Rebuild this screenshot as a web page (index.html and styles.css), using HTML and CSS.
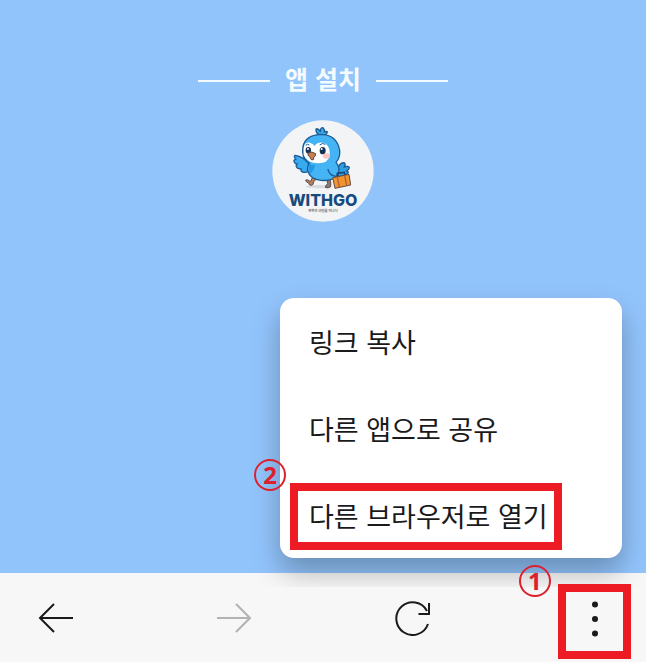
FILE: index.html
```html
<!DOCTYPE html>
<html lang="ko">
<head>
<meta charset="utf-8">
<meta name="viewport" content="width=device-width, initial-scale=1">
<title>앱 설치</title>
<link rel="stylesheet" href="styles.css">
</head>
<body>
<main class="page">
  <h1 class="title">앱 설치</h1>
  <svg class="logo" viewBox="12 12 306 306" role="img" aria-label="WITHGO">
    <circle cx="165" cy="165" r="152" fill="#f2f4f6"/>
    <ellipse cx="152" cy="212" rx="38" ry="5" fill="#d9dcdf"/>
    <g stroke="#1d5a92" stroke-width="4" stroke-linejoin="round" stroke-linecap="round">
      <path d="M205 165 Q216 136 230 141 Q234 147 228 153 Q242 148 244 155 Q243 162 235 165 Q244 167 239 173 Q229 181 213 182Z" fill="#2f9fe6"/>
      <path d="M134 184 L127 197 Q119 189 113 192 Q112 197 123 202 Q122 208 131 208 Q138 206 136 198 L146 188Z" fill="#b9805a" stroke="#5d4a48" stroke-width="3"/>
      <path d="M176 190 L179 203 Q170 211 173 215 Q181 217 188 212 Q190 202 186 189Z" fill="#8a7a78" stroke="#5d4a48" stroke-width="3"/>
      <path d="M122 143 Q107 122 81 118 Q76 121 84 130 Q74 131 80 140 Q84 144 88 144 Q81 149 88 156 Q94 160 99 158 Q97 167 107 169 Q117 171 127 162Z" fill="#38aaf0"/>
      <path d="M152 55 Q143 50 144 39 Q150 36 157 47 Q157 35 165 35 Q171 41 169 48 Q175 44 178 48 Q176 55 170 58Z" fill="#38aaf0"/>
      <path d="M105 92 Q111 58 158 55 Q207 56 215 103 Q217 125 204 139 Q218 154 210 176 Q196 196 159 193 Q126 190 119 164 Q117 150 124 142 Q99 127 105 92Z" fill="#45b4f5"/>
    </g>
    <path d="M107 99 Q108 77 125 80 Q136 83 139 90 Q151 75 171 82 Q188 94 185 121 Q179 142 151 142 Q116 140 107 116Z" fill="#fff"/>
    <path d="M123 145 Q133 148 141 147 Q139 163 126 174 Q120 160 123 145Z" fill="#2299e6"/>
    <path d="M180 160 Q183 178 204 181" fill="none" stroke="#1d5a92" stroke-width="4" stroke-linecap="round"/>
    <path d="M155 87 Q163 79 172 85 M113 88 Q118 82 124 87" fill="none" stroke="#1d5a92" stroke-width="3"/>
    <ellipse cx="121" cy="103" rx="8" ry="10" fill="#143253"/>
    <ellipse cx="164" cy="104" rx="9" ry="11" fill="#143253"/>
    <circle cx="120" cy="99" r="3" fill="#fff"/>
    <circle cx="161" cy="99" r="3" fill="#fff"/>
    <ellipse cx="175" cy="120" rx="11" ry="8" fill="#fac7c6"/>
    <path d="M120 112 Q131 104 143 113 Q144 121 137 123 Q140 132 132 132 Q126 130 126 122 Q118 120 120 112Z" fill="#c6814f" stroke="#65463f" stroke-width="3"/>
    <path d="M208 182 L208 172 L229 169 L231 178" fill="none" stroke="#174a7c" stroke-width="5"/>
    <path d="M194 185 L243 175 L248 207 L201 217Z" fill="#f2932f" stroke="#654a42" stroke-width="3" stroke-linejoin="round"/>
    <path d="M208 183 L214 214 M230 179 L236 209" stroke="#a8642f" stroke-width="4"/>
    <text class="logo-name" x="165" y="269">WITHGO</text>
    <text class="logo-tagline" x="165" y="289">완벽한 여정을 떠나다</text>
  </svg>
</main>

<nav class="toolbar" aria-label="브라우저 도구">
  <button class="tool" type="button" aria-label="뒤로">
    <svg class="icon" viewBox="0 0 36 36"><path d="M35 18H3M16 4L2 18L16 32"/></svg>
  </button>
  <button class="tool tool-disabled" type="button" aria-label="앞으로" disabled>
    <svg class="icon" viewBox="0 0 36 36"><path d="M1 18H33M20 4L34 18L20 32"/></svg>
  </button>
  <button class="tool" type="button" aria-label="새로고침">
    <svg class="icon" viewBox="0 0 36 36"><path d="M33 24A16.300 16.300 0 1 1 32 11M23.500 14H34V3"/></svg>
  </button>
  <button class="tool tool-more" type="button" aria-label="더보기">
    <svg class="icon icon-dots" viewBox="0 0 36 36"><circle cx="18" cy="3.500" r="3"/><circle cx="18" cy="18" r="3"/><circle cx="18" cy="32.500" r="3"/></svg>
    <span class="step step-one">1</span>
  </button>
</nav>

<div class="overlay">
  <div class="menu">
    <button class="menu-item" type="button">링크 복사</button>
    <button class="menu-item" type="button">다른 앱으로 공유</button>
    <button class="menu-item" type="button"><span class="marked">다른 브라우저로 열기<span class="step step-two">2</span></span></button>
  </div>
</div>
</body>
</html>
```
FILE: styles.css
```css
* {
  box-sizing: border-box;
}

body {
  margin: 0;
  min-height: 100vh;
  display: flex;
  flex-direction: column;
  position: relative;
  font-family: "Noto Sans CJK KR", sans-serif;
  color: #1a1a1a;
}

button {
  margin: 0;
  padding: 0;
  border: 0;
  background: none;
  color: inherit;
  font: inherit;
}

.page {
  flex: 1;
  display: flex;
  flex-direction: column;
  align-items: center;
  gap: 22px;
  padding-top: 58px;
  background: #92c4fc;
}

.title {
  display: flex;
  align-items: center;
  gap: 15px;
  margin: 0;
  color: #f4fbff;
  font-size: 25px;
  line-height: 40px;
  font-weight: 700;
}

.title::before,
.title::after {
  content: "";
  width: 72px;
  height: 2px;
  margin-top: 6px;
  background: #f4fbff;
}

.logo {
  width: 102px;
  height: 102px;
}

.logo-name {
  font: 800 48px Inter, sans-serif;
  fill: #164b7c;
  text-anchor: middle;
}

.logo-tagline {
  font: 500 10px "Noto Sans CJK KR", sans-serif;
  fill: #4b5057;
  text-anchor: middle;
}

.toolbar {
  height: 89px;
  display: flex;
  align-items: center;
  justify-content: space-between;
  padding: 7px 15px 0 23px;
  background: #f7f7f7;
}

.tool {
  position: relative;
  z-index: 2;
  width: 66px;
  height: 75px;
  display: grid;
  place-items: center;
  padding-bottom: 6px;
}

.tool-disabled {
  color: #b2b2b2;
}

.tool-more {
  width: 73px;
  padding: 0 0 4px 2px;
  border: 8px solid #ed1c24;
}

.icon {
  width: 36px;
  height: 36px;
  fill: none;
  stroke: currentColor;
  stroke-width: 2;
}

.icon-dots {
  fill: currentColor;
  stroke: none;
}

.overlay {
  position: absolute;
  inset: 0 0 75px;
  display: flex;
  align-items: flex-end;
  justify-content: flex-end;
  padding: 0 24px 29px 0;
  overflow: hidden;
  pointer-events: none;
}

.menu {
  width: 342px;
  display: grid;
  gap: 1px;
  border-radius: 14px;
  background: #fff;
  box-shadow: 0 14px 28px rgba(0, 0, 0, 0.28);
  pointer-events: auto;
}

.menu-item {
  height: 86px;
  padding: 2px 0 0 29px;
  font-size: 27px;
  line-height: 40px;
  text-align: left;
}

.marked {
  position: relative;
  display: inline-block;
  margin-left: -19px;
  padding: 5px 6px 6px 11px;
  border: 8px solid #ed1c24;
}

.step {
  position: absolute;
  width: 32px;
  height: 32px;
  border: 2px solid #dc202d;
  border-radius: 50%;
  color: #dc202d;
  font: 700 24px/28px "Noto Sans", sans-serif;
  text-align: center;
}

.step-one {
  left: -47px;
  top: -27px;
}

.step-two {
  left: -44px;
  top: -32px;
}
```
